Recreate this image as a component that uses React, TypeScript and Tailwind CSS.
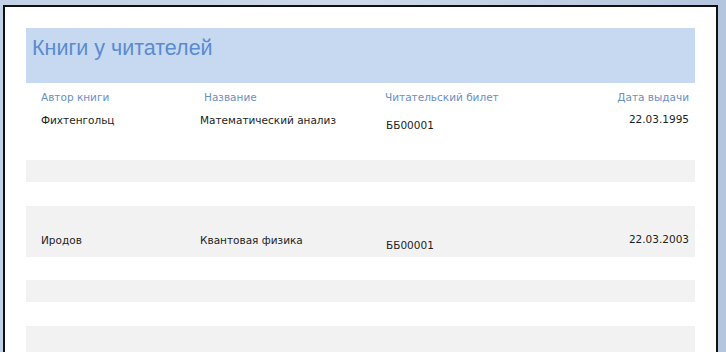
const labelFont = { fontFamily: '"DejaVu Sans", "Liberation Sans", sans-serif' }

interface Loan {
  author: string
  title: string
  card: string
  date: string
}

const loans: Loan[] = [
  { author: 'Фихтенгольц', title: 'Математический анализ', card: 'ББ00001', date: '22.03.1995' },
  { author: 'Иродов', title: 'Квантовая физика', card: 'ББ00001', date: '22.03.2003' },
]

function LoanRow({ loan }: { loan: Loan }) {
  return (
    <div className="flex items-start text-[10.5px] leading-[14px] text-[#1e1e1e]" style={labelFont}>
      <div className="w-[174px] pl-[15px]">{loan.author}</div>
      <div className="w-[186px]">{loan.title}</div>
      <div className="mt-[5px] w-[120px]">{loan.card}</div>
      <div className="-mt-[1px] flex-1 pr-[6px] text-right">{loan.date}</div>
    </div>
  )
}

export default function App() {
  return (
    <div className="h-[352px] w-[726px] overflow-hidden bg-gradient-to-r from-[#c3d1e6] via-[#cdd9ea] to-[#b4c5de] pl-[3px] pr-[8px] pt-[5px]">
      <div className="h-full border-l-2 border-r-2 border-t-2 border-[#111] bg-white px-[21px] pt-[21px]">
        {/* report header */}
        <div className="h-[55px] bg-[#c6d9f0] pl-[6px] pt-[7px]">
          <h1
            className="text-[21.5px] leading-[26px] text-[#5a8bcf]"
            style={{ fontFamily: '"Liberation Sans", sans-serif' }}
          >
            Книги у читателей
          </h1>
        </div>

        {/* column captions */}
        <div
          className="mt-[7px] flex h-[14px] text-[10.5px] leading-[14px] text-[#6a8fc6]"
          style={labelFont}
        >
          <div className="w-[178px] pl-[15px]">Автор книги</div>
          <div className="w-[181px]">Название</div>
          <div className="w-[120px]">Читательский билет</div>
          <div className="flex-1 pr-[6px] text-right">Дата выдачи</div>
        </div>

        {/* detail rows */}
        <div className="h-[56px] pt-[9px]">
          <LoanRow loan={loans[0]} />
        </div>
        <div className="h-[22px] bg-[#f2f2f2]" />
        <div className="h-[24px]" />
        <div className="h-[51px] bg-[#f2f2f2] pt-[27px]">
          <LoanRow loan={loans[1]} />
        </div>
        <div className="h-[23px]" />
        <div className="h-[22px] bg-[#f2f2f2]" />
        <div className="h-[24px]" />
        <div className="h-[40px] bg-[#f2f2f2]" />
      </div>
    </div>
  )
}
